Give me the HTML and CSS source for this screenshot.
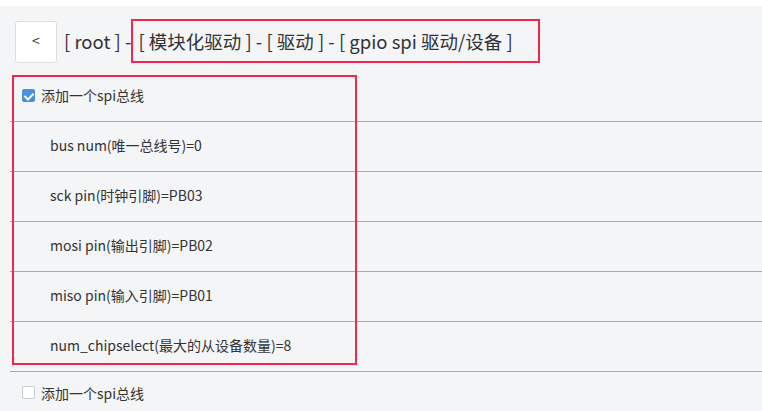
FILE: index.html
```html
<!DOCTYPE html>
<html lang="zh">
<head>
  <meta charset="UTF-8" />
  <title>gpio spi 驱动/设备</title>
  <link rel="stylesheet" href="styles.css">
</head>
<body>
  <div class="topbar"></div>

  <header class="crumbs">
    <button class="back">&lt;</button>
    <div class="path">
      <span>[ root ] -</span><span class="mark">[ 模块化驱动 ] - [ 驱动 ] - [ gpio spi 驱动/设备 ]</span>
    </div>
  </header>

  <main class="list">
    <div class="group">
      <label class="row">
        <span class="check on"></span>添加一个spi总线
      </label>
      <div class="row sub">bus num(唯一总线号)=0</div>
      <div class="row sub">sck pin(时钟引脚)=PB03</div>
      <div class="row sub">mosi pin(输出引脚)=PB02</div>
      <div class="row sub">miso pin(输入引脚)=PB01</div>
      <div class="row sub">num_chipselect(最大的从设备数量)=8</div>
      <div class="group-mark"></div>
    </div>
    <label class="row last">
      <span class="check"></span>添加一个spi总线
    </label>
  </main>
</body>
</html>
```

FILE: styles.css
```css
body {
  margin: 0;
  background-color: #f4f5f7;
  color: #333;
  font-family: "Noto Sans CJK SC", "Noto Sans", sans-serif;
  overflow: hidden;
}

.topbar {
  height: 6px;
  background-color: #fff;
}

.crumbs {
  display: flex;
  align-items: center;
  padding: 14px 0 0 15px;
  height: 43px;
}

.back {
  width: 42px;
  height: 42px;
  background-color: #fff;
  border: 1px solid #dcdcdc;
  border-radius: 3px;
  color: #333;
  font-family: inherit;
  font-size: 14px;
  padding: 0 0 3px;
  margin-right: 7px;
}

.path {
  font-size: 18.5px;
  white-space: nowrap;
  color: #333;
  padding-bottom: 1px;
}

.path .mark {
  display: inline-block;
  padding: 7px 25px 7px 5px;
  border: 2px solid #f8234f;
}

.list {
  margin: 9px 0 0 10px;
}

.group {
  position: relative;
}

.group-mark {
  position: absolute;
  top: 3px;
  left: 2px;
  width: 341px;
  height: 286px;
  border: 2px solid #f8234f;
  pointer-events: none;
}

.row {
  display: flex;
  align-items: center;
  box-sizing: border-box;
  height: 50px;
  padding-bottom: 3px;
  border-bottom: 1px solid #aaa;
  padding-left: 12px;
  font-size: 14px;
}

.row.sub {
  padding-left: 40px;
}

.row.last {
  border-bottom: 1px dotted #ddd;
  height: 45px;
}

.check {
  width: 13px;
  height: 13px;
  border-radius: 2px;
  border: 1px solid #c8ccd4;
  background-color: #fff;
  box-sizing: border-box;
  margin-right: 6px;
  position: relative;
}

.check.on {
  background-color: #4a90e2;
  border-color: #4a90e2;
}

.check.on::after {
  content: "";
  position: absolute;
  left: 3px;
  top: 1px;
  width: 4px;
  height: 7px;
  border: solid #fff;
  border-width: 0 2px 2px 0;
  transform: rotate(45deg);
}
```
